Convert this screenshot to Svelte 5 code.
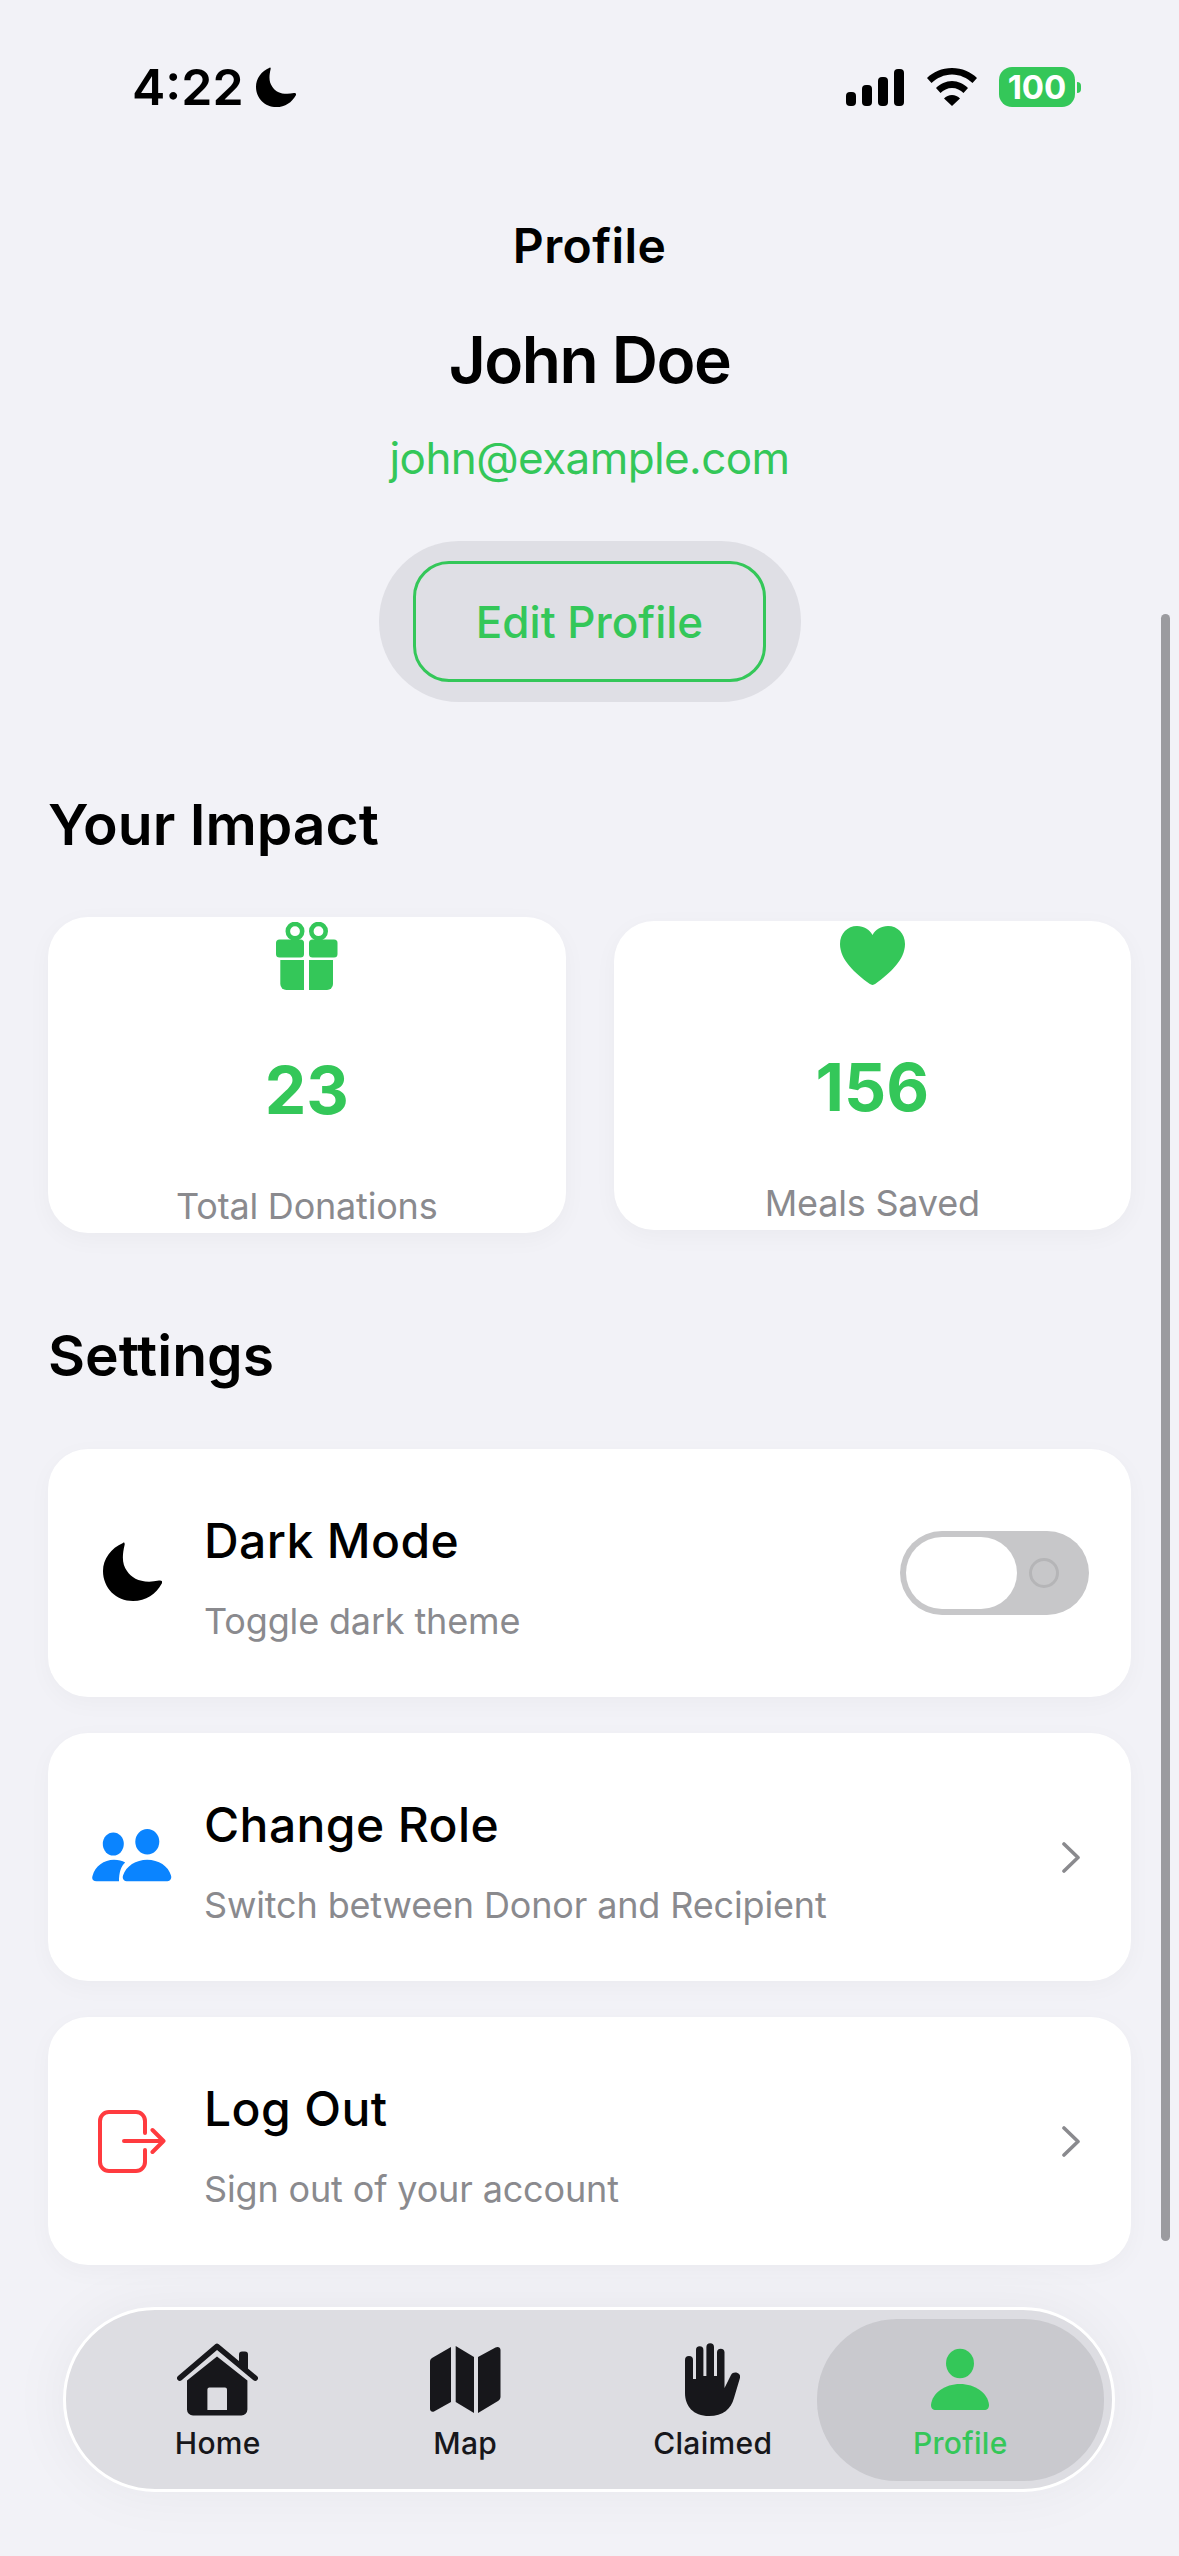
<script>
    let darkMode = $state(false);
</script>

<div class="screen">
    <!-- Status bar -->
    <header class="status">
        <div class="status-left">
            <span class="time">4:22</span>
            <svg class="status-moon" viewBox="0 0 59 59" width="40" height="40">
                <path d="M20 1C21 0 22 1 21.6 3C19 14 19 22 24 29C29 37 40 42 56 38.5C58.5 38 60 39.5 58.8 41.5C53 52 43 59 30 59C13 59 0 46 0 29C0 17 8 6 20 1Z" fill="#000" />
            </svg>
        </div>
        <div class="status-right">
            <svg viewBox="0 0 58 37" width="58" height="37" fill="#000">
                <rect x="0" y="23" width="10" height="14" rx="4" />
                <rect x="16" y="16" width="10" height="21" rx="4" />
                <rect x="32" y="8" width="10" height="29" rx="4" />
                <rect x="48" y="0" width="10" height="37" rx="4" />
            </svg>
            <svg class="wifi" viewBox="0 0 50 38" width="50" height="38" fill="#000">
                <path d="M0 10C6 4 15 0 25 0C35 0 44 4 50 10L45.5 15C40 10 33 6.5 25 6.5C17 6.5 10 10 4.5 15Z" />
                <path d="M9 20C13 16 19 13 25 13C31 13 37 16 41 20L36.5 25C33.5 22 29.5 20 25 20C20.5 20 16.5 22 13.5 25Z" />
                <path d="M17 30.5C19 28.5 22 27 25 27C28 27 31 28.5 33 30.5L25 38Z" />
            </svg>
            <div class="battery"><span>100</span></div>
            <div class="battery-nub"></div>
        </div>
    </header>

    <main class="content">
        <h1 class="title">Profile</h1>
        <div class="name">John Doe</div>
        <div class="email">john@example.com</div>
        <div class="edit-wrap">
            <div class="edit-pill">
                <button class="edit-btn">Edit Profile</button>
            </div>
        </div>

        <h2 class="section impact">Your Impact</h2>
        <div class="stats">
            <div class="stat">
                <svg viewBox="0 0 62 68" width="62" height="68" fill="#34c759">
                    <circle cx="19" cy="9.2" r="7.2" fill="none" stroke="#34c759" stroke-width="4.6" />
                    <circle cx="42.5" cy="9.2" r="7.2" fill="none" stroke="#34c759" stroke-width="4.6" />
                    <rect x="0" y="17.5" width="28" height="18" rx="3.5" />
                    <rect x="33" y="17.5" width="28.5" height="18" rx="3.5" />
                    <path d="M4.3 38H28V68H10.3a6 6 0 0 1-6-6Z" />
                    <path d="M33 38H57V62a6 6 0 0 1-6 6H33Z" />
                </svg>
                <div class="stat-num">23</div>
                <div class="stat-label">Total Donations</div>
            </div>
            <div class="stat">
                <svg class="heart" viewBox="0 0 65 59" width="65" height="59" fill="#34c759">
                    <path d="M32.5 59c-1 0-2-.5-3-1.2C15 47 0 34 0 18 0 7.5 7.5 0 17 0c7 0 12.5 3.5 15.5 9C35.5 3.5 41 0 48 0c9.5 0 17 7.5 17 18 0 16-15 29-29.5 39.8-1 .7-2 1.2-3 1.2z" />
                </svg>
                <div class="stat-num">156</div>
                <div class="stat-label">Meals Saved</div>
            </div>
        </div>

        <h2 class="section settings">Settings</h2>
        <div class="rows">
            <div class="row">
                <div class="row-icon lift">
                    <svg viewBox="0 0 59 59" width="59" height="59">
                        <path d="M20 1C21 0 22 1 21.6 3C19 14 19 22 24 29C29 37 40 42 56 38.5C58.5 38 60 39.5 58.8 41.5C53 52 43 59 30 59C13 59 0 46 0 29C0 17 8 6 20 1Z" fill="#000" />
                    </svg>
                </div>
                <div class="row-text">
                    <div class="row-title">Dark Mode</div>
                    <div class="row-sub">Toggle dark theme</div>
                </div>
                <button class="toggle" class:on={darkMode} onclick={() => (darkMode = !darkMode)} aria-label="Toggle dark theme">
                    <span class="knob"></span>
                    <span class="off-mark"></span>
                </button>
            </div>

            <div class="row">
                <div class="row-icon lift">
                    <svg viewBox="0 0 80 53" width="80" height="53" fill="#0a84ff">
                        <ellipse cx="55.3" cy="12.7" rx="12" ry="12.7" />
                        <ellipse cx="21.3" cy="15" rx="10.5" ry="11.5" />
                        <path d="M36 52.3C32 52.3 30 50 31 46.5C34 37 44 30.7 55.2 30.7C66.5 30.7 76.5 37 79 46.5C80 50 78 52.3 74 52.3Z" />
                        <path d="M4.5 52.3C1 52.3-.5 50 .5 47C3 37 12 30.7 22 30.7C26.7 30.7 30 31.5 33.2 33.6C29 37 27 44 27 52.3Z" />
                    </svg>
                </div>
                <div class="row-text">
                    <div class="row-title">Change Role</div>
                    <div class="row-sub">Switch between Donor and Recipient</div>
                </div>
                <svg class="chevron" viewBox="0 0 18 31" width="18" height="31">
                    <path d="M2 2L16 15.5L2 29" fill="none" stroke="#8a8a8e" stroke-width="3.6" stroke-linecap="round" stroke-linejoin="round" />
                </svg>
            </div>

            <div class="row">
                <div class="row-icon">
                    <svg viewBox="0 0 68 63" width="68" height="63" fill="none" stroke="#ff3b3f" stroke-width="4" stroke-linecap="round" stroke-linejoin="round">
                        <path d="M47 23V11a9 9 0 0 0-9-9H11a9 9 0 0 0-9 9V52a9 9 0 0 0 9 9H38a9 9 0 0 0 9-9V40" />
                        <path d="M26 31H65.5M54.5 20L65.5 31L54.5 42" />
                    </svg>
                </div>
                <div class="row-text">
                    <div class="row-title">Log Out</div>
                    <div class="row-sub">Sign out of your account</div>
                </div>
                <svg class="chevron" viewBox="0 0 18 31" width="18" height="31">
                    <path d="M2 2L16 15.5L2 29" fill="none" stroke="#8a8a8e" stroke-width="3.6" stroke-linecap="round" stroke-linejoin="round" />
                </svg>
            </div>
        </div>
    </main>

    <div class="scrollbar"></div>

    <!-- Floating tab bar -->
    <nav class="tabs">
        <div class="tab">
            <svg viewBox="0 0 81 72" width="81" height="72" fill="#17171b">
                <path d="M2.8 34.7L40 2.8L78.2 34.7" fill="none" stroke="#17171b" stroke-width="5.5" stroke-linecap="round" stroke-linejoin="round" />
                <path d="M62 20V11a3 3 0 0 1 3-3h3a3 3 0 0 1 3 3V28Z" />
                <path fill-rule="evenodd" d="M40 13L70.4 37V66a6 6 0 0 1-6 6H16a6 6 0 0 1-6-6V37ZM30.4 46V66.6H50V46a2 2 0 0 0-2-2H32.4a2 2 0 0 0-2 2Z" />
            </svg>
            <span class="tab-label">Home</span>
        </div>
        <div class="tab">
            <svg viewBox="0 0 71 67" width="71" height="67" fill="#17171b">
                <path d="M21 1V56L4 65.5C2 66.5 0 65 0 63V15.5C0 14 .8 12.8 2 12Z" />
                <path d="M25.7 0L44 11V67L25.7 56Z" />
                <path d="M48 11L65.5 1.5C68 0 70.5 1.5 70.5 4V51C70.5 52.5 69.5 54 68 55L48 67Z" />
            </svg>
            <span class="tab-label">Map</span>
        </div>
        <div class="tab">
            <svg viewBox="0 0 55 73" width="55" height="73" fill="#17171b">
                <path d="M0 17a4 4 0 0 1 8 0V36H11V7a3.7 3.7 0 0 1 7.4 0V33H21.4V4a3.8 3.8 0 0 1 7.6 0V33H32V9a3.8 3.8 0 0 1 7.5 0V45L46 32C47.5 29.5 50 29 52.5 30C55 31 55.5 33 54.8 35.5L49 55C46 66 38 73 24 73C8 73 0 63 0 50Z" />
            </svg>
            <span class="tab-label">Claimed</span>
        </div>
        <div class="tab active">
            <svg viewBox="0 0 58 61" width="58" height="61" fill="#34c759">
                <ellipse cx="29" cy="14.5" rx="14" ry="14.7" />
                <path d="M5 61C1.5 61 0 59 0 56C1 44 14 35 29 35C44 35 57 44 58 56C58 59 56.5 61 53 61Z" />
            </svg>
            <span class="tab-label">Profile</span>
        </div>
    </nav>
</div>

<style>
    :global(body) {
        margin: 0;
        background: #f2f2f7;
    }

    .screen {
        position: relative;
        width: 1179px;
        height: 2556px;
        overflow: hidden;
        background: #f2f2f7;
        font-family: Inter, "Liberation Sans", sans-serif;
        color: #000;
    }

    /* ── Status bar ── */
    .status {
        display: flex;
        justify-content: space-between;
        align-items: flex-start;
        height: 153px;
        padding: 62px 98px 0 132px;
        box-sizing: border-box;
    }
    .status-left,
    .status-right {
        display: flex;
        align-items: center;
        height: 50px;
    }
    .time {
        font-size: 50px;
        line-height: 50px;
        font-weight: 600;
    }
    .status-moon {
        margin-left: 12px;
    }
    .wifi {
        margin-left: 23px;
    }
    .battery {
        display: flex;
        align-items: center;
        justify-content: center;
        width: 76px;
        height: 40px;
        margin-left: 22px;
        border-radius: 13px;
        background: #34c759;
        color: #fff;
        font-size: 33px;
        font-weight: 700;
        line-height: 40px;
    }
    .battery-nub {
        width: 4px;
        height: 11px;
        margin-left: 2px;
        border-radius: 0 6px 6px 0;
        background: #34c759;
    }

    /* ── Header block ── */
    .content {
        display: flex;
        flex-direction: column;
        padding: 0 48px;
        box-sizing: border-box;
        width: 1179px;
    }
    .title {
        margin: 63px 0 0;
        font-size: 48px;
        line-height: 60px;
        font-weight: 600;
        letter-spacing: 0.4px;
        text-align: center;
    }
    .name {
        margin-top: 44px;
        font-size: 64px;
        line-height: 80px;
        font-weight: 600;
        letter-spacing: -1.5px;
        text-align: center;
    }
    .email {
        margin-top: 28px;
        font-size: 44px;
        line-height: 60px;
        letter-spacing: -0.6px;
        color: #34c759;
        text-align: center;
    }
    .edit-wrap {
        display: flex;
        justify-content: center;
        margin-top: 53px;
    }
    .edit-pill {
        display: flex;
        align-items: center;
        justify-content: center;
        width: 422px;
        height: 161px;
        border-radius: 80px;
        background: #dfdfe5;
    }
    .edit-btn {
        width: 353px;
        height: 121px;
        padding: 0;
        border: 3px solid #34c759;
        border-radius: 36px;
        background: transparent;
        color: #34c759;
        font-family: inherit;
        font-size: 44px;
        font-weight: 500;
    }

    /* ── Section headings ── */
    .section {
        margin: 0;
        font-size: 57px;
        line-height: 70px;
        font-weight: 600;
    }
    .impact {
        margin-top: 88px;
    }
    .settings {
        margin-top: 88px;
    }

    /* ── Impact cards ── */
    .stats {
        display: flex;
        align-items: center;
        gap: 48px;
        margin-top: 57px;
    }
    .stat {
        flex: 1;
        display: flex;
        flex-direction: column;
        align-items: center;
        padding: 5px 0 5px;
        border-radius: 40px;
        background: #fff;
        box-shadow: 0 6px 24px rgba(0, 0, 0, 0.035);
    }
    .stat svg {
        display: block;
    }
    .stat svg.heart {
        margin-bottom: 2px;
    }
    .stat-num {
        margin-top: 60px;
        font-size: 66px;
        line-height: 80px;
        font-weight: 700;
        color: #34c759;
    }
    .stat-label {
        margin-top: 54px;
        font-size: 36px;
        line-height: 44px;
        letter-spacing: -0.2px;
        color: #8a8a8e;
    }

    /* ── Settings rows ── */
    .rows {
        display: flex;
        flex-direction: column;
        gap: 36px;
        margin-top: 58px;
    }
    .row {
        display: flex;
        align-items: center;
        height: 248px;
        padding: 0 42px 0 44px;
        box-sizing: border-box;
        border-radius: 40px;
        background: #fff;
        box-shadow: 0 6px 24px rgba(0, 0, 0, 0.03);
    }
    .row-icon {
        display: flex;
        align-items: center;
        justify-content: center;
        flex-shrink: 0;
        width: 80px;
    }
    .row-icon.lift {
        margin-bottom: 4px;
    }
    .row-text {
        flex: 1;
        margin-left: 32px;
        padding-top: 10px;
    }
    .row-title {
        font-size: 48px;
        line-height: 60px;
        font-weight: 500;
        letter-spacing: 0.4px;
    }
    .row-sub {
        margin-top: 25px;
        font-size: 36px;
        line-height: 50px;
        letter-spacing: -0.15px;
        color: #8a8a8e;
    }
    .chevron {
        margin-right: 9px;
    }

    .toggle {
        display: flex;
        align-items: center;
        flex-shrink: 0;
        width: 189px;
        height: 84px;
        padding: 0 0 0 6px;
        border: none;
        border-radius: 42px;
        background: #c7c7c9;
    }
    .knob {
        width: 111px;
        height: 72px;
        border-radius: 36px;
        background: #fff;
    }
    .off-mark {
        width: 30px;
        height: 30px;
        margin-left: 12px;
        box-sizing: border-box;
        border: 3px solid #b5b5b7;
        border-radius: 50%;
    }

    /* ── Overlays ── */
    .scrollbar {
        position: absolute;
        top: 614px;
        left: 1161px;
        width: 9px;
        height: 1627px;
        border-radius: 5px;
        background: #9b9b9f;
    }
    .tabs {
        position: absolute;
        top: 2307px;
        left: 63px;
        display: flex;
        width: 1052px;
        height: 185px;
        padding: 33px 28px 0;
        box-sizing: border-box;
        border: 3px solid #fff;
        border-radius: 92px;
        background: #dddde2;
        box-shadow: 0 0 60px rgba(0, 0, 0, 0.05);
    }
    .tab {
        position: relative;
        display: flex;
        flex-direction: column;
        align-items: center;
        flex: 1;
        height: 111px;
        color: #17171b;
    }
    .tab svg {
        position: relative;
        display: block;
        flex-shrink: 0;
        height: 73px;
    }
    .tab-label {
        position: relative;
        margin-top: 9px;
        font-size: 30px;
        line-height: 36px;
        font-weight: 500;
        letter-spacing: 0.3px;
    }
    .tab.active {
        color: #34c759;
    }
    .tab.active::before {
        content: "";
        position: absolute;
        top: -24px;
        left: -20px;
        right: -20px;
        height: 162px;
        border-radius: 80px;
        background: #c9c9ce;
    }
</style>
